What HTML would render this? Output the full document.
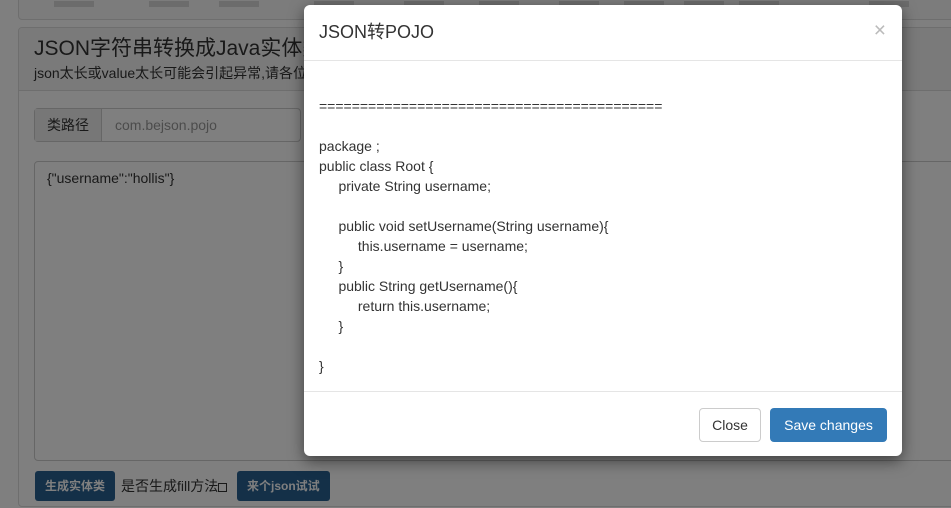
<!DOCTYPE html>
<html style="height:508px;overflow:hidden"><head><meta charset="utf-8"><style>
*{box-sizing:border-box}
body{margin:0;width:951px;height:508px;overflow:hidden;background:#fff;font-family:"Liberation Sans","Noto Sans CJK SC",sans-serif;color:#333;position:relative}
.nav{position:absolute;left:18px;top:-20px;width:960px;height:40px;border:1px solid #ddd;border-radius:4px;background:#f8f8f8}
.nav span{position:absolute;top:20px;width:40px;height:6px;background:#d8d8d8}
.panel{position:absolute;left:18px;top:27px;width:960px;height:480px;border:1px solid #ddd;border-radius:4px;background:#fff;overflow:hidden}
.ph{height:63px;background:#f5f5f5;border-bottom:1px solid #ddd;padding:7px 15px}
.ph h3{margin:0;font-size:21px;font-weight:normal;line-height:28px}
.ph p{margin:0;font-size:14px;line-height:20px}
.ig{position:absolute;left:15px;top:80px;width:267px;height:34px;border:1px solid #ccc;border-radius:4px;font-size:14px}
.ig .a{position:absolute;left:0;top:0;width:67px;height:32px;background:#eee;border-right:1px solid #ccc;line-height:32px;text-align:center}
.ig .b{position:absolute;left:80px;top:0;line-height:32px;color:#999}
.ta{position:absolute;left:15px;top:133px;width:940px;height:300px;border:1px solid #ccc;border-radius:4px;padding:8px 12px;font-size:14px}
.btn{position:absolute;top:443px;height:30px;background:#286090;color:#fff;font-size:12px;line-height:30px;padding:0 10px;border-radius:3px;font-weight:bold}
.lbl{position:absolute;top:443px;left:102px;line-height:30px;font-size:14px}
.ov{position:absolute;left:0;top:0;width:951px;height:508px;background:rgba(0,0,0,.5)}
.modal{position:absolute;left:304px;top:5px;width:598px;height:451px;background:#fff;border-radius:6px;box-shadow:0 5px 15px rgba(0,0,0,.5);overflow:hidden}
.mh{height:56px;border-bottom:1px solid #e5e5e5;padding:0 15px}
.mh h4{margin:0;font-size:18px;font-weight:normal;line-height:55px}
.x{position:absolute;right:16px;top:14px;font-size:21px;color:#bbb}
.mb{padding:35px 15px 0;font-size:14px;line-height:20px;height:330px;white-space:pre;color:#333}
.mf{position:absolute;left:0;right:0;top:386px;height:65px;border-top:1px solid #e5e5e5}
.b1{position:absolute;left:395px;top:16px;width:62px;height:34px;border:1px solid #ccc;border-radius:4px;line-height:32px;text-align:center;font-size:14px}
.b2{position:absolute;left:466px;top:16px;width:117px;height:34px;background:#337ab7;border-radius:4px;color:#fff;line-height:34px;text-align:center;font-size:14px}
</style></head><body>
<div class="nav"><span style="left:35px"></span><span style="left:130px"></span><span style="left:200px"></span><span style="left:295px"></span><span style="left:385px"></span><span style="left:460px"></span><span style="left:540px"></span><span style="left:605px"></span><span style="left:665px"></span><span style="left:720px"></span><span style="left:850px"></span></div>
<div class="panel">
<div class="ph"><h3>JSON字符串转换成Java实体类(POJO)</h3><p>json太长或value太长可能会引起异常,请各位注意</p></div>
<div class="ig"><div class="a">类路径</div><div class="b">com.bejson.pojo</div></div>
<div class="ta">{"username":"hollis"}</div>
<div class="btn" style="left:16px">生成实体类</div>
<div class="lbl">是否生成fill方法<span style="display:inline-block;width:9px;height:9px;border:1px solid #333;vertical-align:-1px"></span></div>
<div class="btn" style="left:218px">来个json试试</div>
</div>
<div class="ov"></div>
<div class="modal">
<div class="mh"><h4>JSON转POJO</h4></div><div class="x">×</div>
<div class="mb">==========================================

package ;
public class Root {
     private String username;

     public void setUsername(String username){
          this.username = username;
     }
     public String getUsername(){
          return this.username;
     }

}</div>
<div class="mf"><div class="b1">Close</div><div class="b2">Save changes</div></div>
</div>
</body></html>
